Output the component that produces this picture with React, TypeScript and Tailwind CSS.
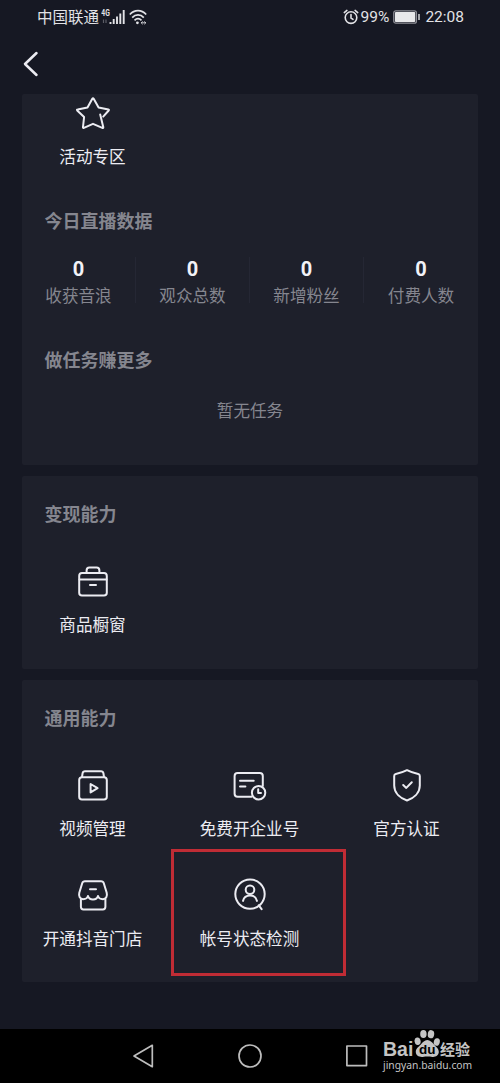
import type { ReactNode } from "react";

function Icon({ children }: { children: ReactNode }) {
  return (
    <svg
      className="w-9 h-9 shrink-0"
      viewBox="0 0 36 36"
      fill="none"
      stroke="#ececf2"
      strokeWidth="2"
      strokeLinecap="round"
      strokeLinejoin="round"
    >
      {children}
    </svg>
  );
}

const StarIcon = () => (
  <Icon>
    <path d="M25.2 18.4 28.3 31.2Q28.5 32.4 27.3 31.8L18 27.8 8.9 31.8Q7.7 32.3 8 31L9.1 21 2.2 14.5Q1.5 13.6 2.7 13.4L12.5 11.4 17.3 2.8Q18 1.7 18.7 2.8L23.6 11.4 33.4 13.4Q34.4 13.6 33.7 14.5L28.2 20.6" />
  </Icon>
);

const BriefcaseIcon = () => (
  <Icon>
    <rect x="4.2" y="9.1" width="27.6" height="22.4" rx="2.8" />
    <path d="M11.6 9V6.4Q11.6 3.6 14.4 3.6H21.6Q24.4 3.6 24.4 6.4V9M4.5 15.4H31.5M15 21H21" />
  </Icon>
);

const VideoIcon = () => (
  <Icon>
    <rect x="4.2" y="9.3" width="27.6" height="22.2" rx="2.8" />
    <path d="M7 9 7.6 5.2Q8 3.3 10 3.3H26Q28 3.3 28.4 5.2L29 9M15.6 16V24.4L22.6 20.2Z" />
  </Icon>
);

const CompanyIcon = () => (
  <Icon>
    <path d="M19.5 28.8H5.6Q2.6 28.8 2.6 25.8V8Q2.6 5 5.6 5H27.8Q30.8 5 30.8 8V18M8 12.7H21.7M8 18.4H13.4" />
    <circle cx="26.6" cy="24.7" r="6.7" />
    <path d="M26.2 21.3V25H29" />
  </Icon>
);

const ShieldIcon = () => (
  <Icon>
    <path d="M18 2.2C14.5 4 10.5 5.3 6.8 6Q5.2 6.4 5.2 8V17.5C5.2 25.3 11.5 30.3 18 32.5C24.5 30.3 30.8 25.3 30.8 17.5V8Q30.8 6.4 29.2 6C25.5 5.3 21.5 4 18 2.2Z" />
    <path d="M14.2 17 17.3 19.9 22.8 14.3" />
  </Icon>
);

const ShopIcon = () => (
  <Icon>
    <path d="M10 3.2H26Q28.2 3.2 28.8 5.2L31.7 14.8C32.6 18.3 31 21 28 21.2C25.4 21.2 23.4 19.8 23 17.9C22.4 20 20.6 21.4 18 21.4C15.4 21.4 13.6 20 13 17.9C12.6 19.8 10.6 21.2 8 21.2C5 21 3.4 18.3 4.3 14.8L7.2 5.2Q7.8 3.2 10 3.2Z" />
    <path d="M5.9 21V28.8Q5.9 31.4 8.5 31.4H27.8Q30.4 31.4 30.4 28.8V21M15 11.2H21" />
  </Icon>
);

const AccountIcon = () => (
  <Icon>
    <circle cx="18" cy="16.1" r="14.7" />
    <circle cx="18" cy="11.8" r="4.3" />
    <path d="M11 22.9C11.8 19.5 14.5 17.6 18 17.6S24.2 19.5 25 22.9M26.8 27.3 29.6 31.1" />
  </Icon>
);

function Tile({ icon, label }: { icon: ReactNode; label: string }) {
  return (
    <div className="w-[101px] flex flex-col items-center gap-3">
      {icon}
      <p className="text-[16.6px] leading-6 text-[#ececf2] whitespace-nowrap">
        {label}
      </p>
    </div>
  );
}

function Title({ children }: { children: ReactNode }) {
  return (
    <h2 className="pl-[22.5px] text-lg leading-6 font-bold text-[#85868f]">
      {children}
    </h2>
  );
}

const stats = ["收获音浪", "观众总数", "新增粉丝", "付费人数"];

function StatusBar() {
  return (
    <div className="h-[34px] pl-[37px] pr-9 flex items-center justify-between text-[15.5px] text-[#e2e2e6]">
      <div className="flex items-center">
        <span>中国联通</span>
        <svg className="ml-0.5 w-[26px] h-5" viewBox="0 0 26 20">
          <text
            x="0.3"
            y="9"
            fontSize="9"
            fontWeight="700"
            fontFamily="Roboto, sans-serif"
            textLength="8.5"
            lengthAdjust="spacingAndGlyphs"
            fill="#e2e2e6"
          >
            4G
          </text>
          <path d="M2.5 12.5V16M5 12.5V16" stroke="#5c5d66" strokeWidth="1.2" />
          <path
            d="M9.5 15V17M12.7 12V17M16 9.5V17M19.3 6.5V17M22.7 3V17"
            stroke="#e2e2e6"
            strokeWidth="1.9"
          />
        </svg>
        <svg
          className="ml-0.5 w-[18px] h-5"
          viewBox="0 0 18 20"
          fill="none"
          stroke="#e2e2e6"
          strokeWidth="1.7"
        >
          <path d="M0.8 7.5C5.5 2.4 12.5 2.4 17.2 7.5M3.2 10.6C6.5 7 11.5 7 14.8 10.6M5.5 13.4C7.6 11.3 10.4 11.3 12.5 13.4" />
          <circle cx="8.4" cy="15.8" r="1.4" fill="#e2e2e6" stroke="none" />
          <path
            d="M12.3 15.8H16.7M13.6 14.4 12.2 15.8 13.6 17.2M15.4 14.4 16.8 15.8 15.4 17.2"
            strokeWidth="0.9"
          />
        </svg>
      </div>
      <div className="flex items-center">
        <svg
          className="w-4 h-4"
          viewBox="0 0 16 16"
          fill="none"
          stroke="#e2e2e6"
          strokeWidth="1.6"
          strokeLinecap="round"
        >
          <circle cx="8" cy="8.6" r="5.8" />
          <path d="M1.3 3.6 3.9 1.4M14.7 3.6 12.1 1.4M8 5.6V9L10 10.3" />
        </svg>
        <span className="ml-0.5 pt-0.5 font-[Roboto,sans-serif]">99%</span>
        <svg className="ml-1 w-7 h-4" viewBox="0 0 28 16">
          <rect
            x="0.8"
            y="1.8"
            width="22.6"
            height="12.4"
            rx="2"
            fill="none"
            stroke="#8f8f97"
            strokeWidth="1.3"
          />
          <rect x="2" y="3" width="20.2" height="10" rx="0.8" fill="#e8e8ea" />
          <path d="M26 5V11" stroke="#d5d5d9" strokeWidth="1.5" />
        </svg>
        <span className="ml-1 pt-0.5 font-[Roboto,sans-serif]">22:08</span>
      </div>
    </div>
  );
}

function Watermark() {
  return (
    <div className="absolute left-[383px] top-[1029px] w-[92px] text-[#c4c4c4] font-['Noto_Sans',sans-serif]">
      <div className="h-[29px] flex items-end">
        <span className="w-[31px] text-[19.5px] leading-6 -mb-[3px] font-bold font-['Liberation_Sans',sans-serif]">
          Bai
        </span>
        <svg className="w-[27px] h-[29px]" viewBox="0 0 27 29">
          <g fill="#c4c4c4">
            <ellipse cx="3.6" cy="12.2" rx="3" ry="3.8" transform="rotate(-12 3.6 12.2)" />
            <ellipse cx="9.4" cy="5" rx="3.2" ry="4.1" />
            <ellipse cx="17" cy="5.2" rx="3.2" ry="4.1" transform="rotate(8 17 5.2)" />
            <ellipse cx="22.8" cy="13" rx="3" ry="3.8" transform="rotate(14 22.8 13)" />
            <path d="M13.3 11C16 11 18 13.2 20 15.5C21.8 17.8 25 19.5 24.8 23.3C24.5 26.7 21.5 28.2 18.4 27.9C15 27.4 12 27.4 8.8 27.9C5 28.2 2 26.7 1.8 23.3C1.6 19.6 4.8 17.8 6.8 15.5C8.7 13.2 10.6 11 13.3 11Z" />
          </g>
          <text
            x="13.3"
            y="25.4"
            textAnchor="middle"
            fontSize="13.5"
            fontWeight="700"
            fontFamily="Liberation Sans, sans-serif"
            fill="#000000"
          >
            du
          </text>
        </svg>
        <span className="-ml-px -mb-px text-[15px] leading-5 font-bold whitespace-nowrap font-['Noto_Sans_CJK_SC',sans-serif]">
          经验
        </span>
      </div>
      <p className="-mt-px text-[10.3px] leading-4 whitespace-nowrap">
        jingyan.baidu.com
      </p>
    </div>
  );
}

export default function App() {
  return (
    <div className="relative w-[500px] h-[1083px] overflow-hidden flex flex-col bg-[#161823] font-['Noto_Sans_CJK_SC',sans-serif]">
      <StatusBar />
      <div className="h-[60px] pl-[22px] flex items-center">
        <svg
          className="w-[18px] h-7"
          viewBox="0 0 18 28"
          fill="none"
          stroke="#ececf2"
          strokeWidth="2.5"
          strokeLinecap="round"
          strokeLinejoin="round"
        >
          <path d="M14.5 3 3 14 14.5 25" />
        </svg>
      </div>

      <main className="flex-1 px-[22px] flex flex-col">
        <section className="h-[371px] pt-0.5 rounded-xs bg-[#1e202b]">
          <div className="pl-5">
            <Tile icon={<StarIcon />} label="活动专区" />
          </div>
          <div className="mt-10">
            <Title>今日直播数据</Title>
          </div>
          <div className="mt-[25px] grid grid-cols-4 divide-x divide-[#252734]">
            {stats.map((label) => (
              <div key={label} className="h-[46px] flex flex-col items-center">
                <p className="text-xl leading-6 font-bold text-[#f2f2f7] font-[Roboto,sans-serif]">
                  0
                </p>
                <p className="mt-0.5 text-[16.6px] leading-6 text-[#85868f]">
                  {label}
                </p>
              </div>
            ))}
          </div>
          <div className="mt-11">
            <Title>做任务赚更多</Title>
          </div>
          <p className="mt-[27px] text-center text-[16.6px] leading-6 text-[#85868f]">
            暂无任务
          </p>
        </section>

        <section className="mt-[11px] h-[193px] pt-[25px] rounded-xs bg-[#1e202b]">
          <Title>变现能力</Title>
          <div className="mt-[39px] pl-5">
            <Tile icon={<BriefcaseIcon />} label="商品橱窗" />
          </div>
        </section>

        <section className="mt-[11px] h-[302px] pt-[25px] rounded-xs bg-[#1e202b]">
          <Title>通用能力</Title>
          <div className="mt-[39px] pl-5 pr-[21px] grid grid-cols-[101px_101px_101px] justify-between gap-y-[38px]">
            <Tile icon={<VideoIcon />} label="视频管理" />
            <Tile icon={<CompanyIcon />} label="免费开企业号" />
            <Tile icon={<ShieldIcon />} label="官方认证" />
            <Tile icon={<ShopIcon />} label="开通抖音门店" />
            <Tile icon={<AccountIcon />} label="帐号状态检测" />
          </div>
        </section>
      </main>

      <nav className="h-[54px] px-[132px] flex items-center justify-between bg-black">
        <svg className="w-[22px] h-6" viewBox="0 0 22 24" fill="none" stroke="#bdbdbd" strokeWidth="1.7" strokeLinejoin="round">
          <path d="M2 12 20.3 1.3V22.7Z" />
        </svg>
        <svg className="w-6 h-6" viewBox="0 0 24 24" fill="none" stroke="#bdbdbd" strokeWidth="1.7">
          <circle cx="12" cy="12" r="11" />
        </svg>
        <svg className="w-[22px] h-[22px]" viewBox="0 0 22 22" fill="none" stroke="#bdbdbd" strokeWidth="1.7" strokeLinejoin="round">
          <rect x="0.9" y="1" width="19.6" height="19.6" />
        </svg>
      </nav>

      <div className="absolute left-[171px] top-[849px] w-[175px] h-[127px] border-3 border-[#c02c35]" />
      <Watermark />
    </div>
  );
}
